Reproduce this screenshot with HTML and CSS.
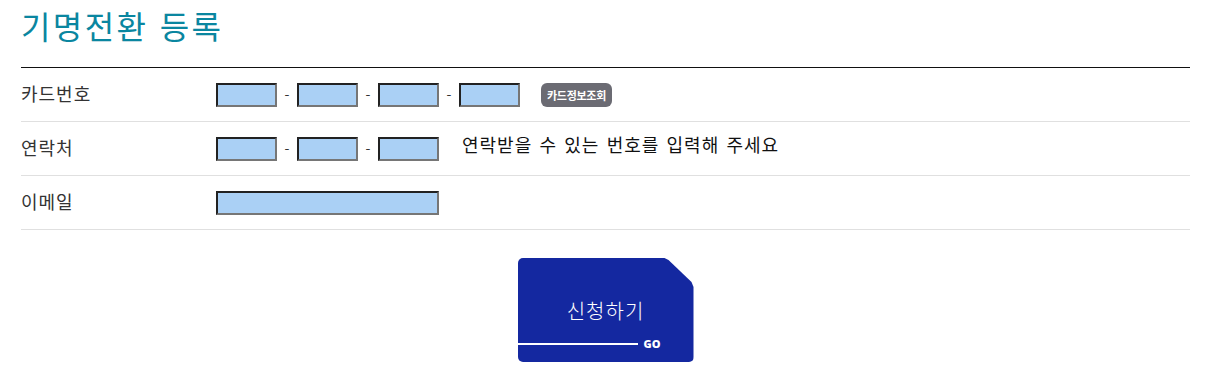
FILE: index.html
```html
<!DOCTYPE html>
<html lang="ko">
<head>
<meta charset="utf-8">
<title>기명전환 등록</title>
<link rel="stylesheet" href="styles.css">
</head>
<body>
<div class="page">
  <h1 class="title">기명전환 등록</h1>
  <div class="form">
    <div class="row">
      <div class="label">카드번호</div>
      <div class="fields">
        <input class="box" type="text">
        <span class="dash">-</span>
        <input class="box" type="text">
        <span class="dash">-</span>
        <input class="box" type="text">
        <span class="dash">-</span>
        <input class="box" type="text">
        <span class="badge">카드정보조회</span>
      </div>
    </div>
    <div class="row">
      <div class="label">연락처</div>
      <div class="fields">
        <input class="box" type="text">
        <span class="dash">-</span>
        <input class="box" type="text">
        <span class="dash">-</span>
        <input class="box" type="text">
        <span class="hint">연락받을 수 있는 번호를 입력해 주세요</span>
      </div>
    </div>
    <div class="row">
      <div class="label">이메일</div>
      <div class="fields">
        <input class="box wide" type="text">
      </div>
    </div>
  </div>
  <div class="actions">
    <button class="go-btn" type="button">
      <span class="go-text">신청하기</span>
      <span class="go-foot"><span class="go-line"></span><span class="go-label">GO</span></span>
    </button>
  </div>
</div>
</body>
</html>
```
FILE: styles.css
```css
* { box-sizing: border-box; }
body {
  margin: 0;
  background: #fff;
  font-family: "Noto Sans CJK KR", "Noto Sans", sans-serif;
  color: #333;
}
.page {
  padding: 0 21px;
}
.title {
  margin: 0;
  padding-top: 5px;
  height: 67px;
  font-size: 32px;
  font-weight: 400;
  line-height: 40px;
  letter-spacing: 2.4px;
  color: #0a86a0;
}
.form {
  border-top: 1px solid #111;
}
.row {
  display: flex;
  align-items: center;
  height: 54px;
  border-bottom: 1px solid #e0e0e0;
}
.label {
  width: 195px;
  padding-bottom: 4px;
  font-size: 18px;
  letter-spacing: 1px;
  color: #333;
}
.fields {
  display: flex;
  align-items: center;
}
.box {
  width: 61px;
  height: 24px;
  margin: 0;
  padding: 0;
  background: #aad0f5;
  border-style: solid;
  border-width: 2px;
  border-color: #222 #767676 #767676 #222;
}
.box.wide { width: 223px; }
.dash {
  width: 20px;
  text-align: center;
  font-size: 14px;
  color: #333;
}
.badge {
  margin-left: 21px;
  height: 24px;
  width: 71px;
  border-radius: 6px;
  background: #6b6b73;
  color: #fff;
  font-size: 11px;
  font-weight: 700;
  line-height: 24px;
  text-align: center;
  letter-spacing: -0.3px;
}
.hint {
  margin-left: 23px;
  margin-bottom: 9px;
  font-size: 18px;
  color: #111;
  letter-spacing: 1px;
  word-spacing: 1.2px;
}
.actions {
  display: flex;
  justify-content: center;
  padding-top: 28px;
}
.go-btn {
  position: relative;
  width: 176px;
  height: 104px;
  padding: 0;
  border: 0;
  border-radius: 5px;
  background: #1428a0;
  clip-path: polygon(0 0, 147px 0, 151px 2px, 174px 24px, 176px 29px, 176px 100%, 0 100%);
  display: flex;
  flex-direction: column;
  align-items: stretch;
  font-family: inherit;
  cursor: pointer;
}
.go-text {
  margin-top: 39px;
  font-size: 20px;
  font-weight: 300;
  letter-spacing: 1px;
  color: #fff;
  line-height: 28px;
  text-align: center;
}
.go-foot {
  display: flex;
  align-items: center;
  margin-top: 12px;
}
.go-line {
  width: 120px;
  height: 2px;
  background: #fff;
}
.go-label {
  margin-left: 6px;
  font-family: "Open Sans", "Noto Sans", sans-serif;
  font-size: 11px;
  font-weight: 800;
  color: #fff;
  line-height: 14px;
}
```
